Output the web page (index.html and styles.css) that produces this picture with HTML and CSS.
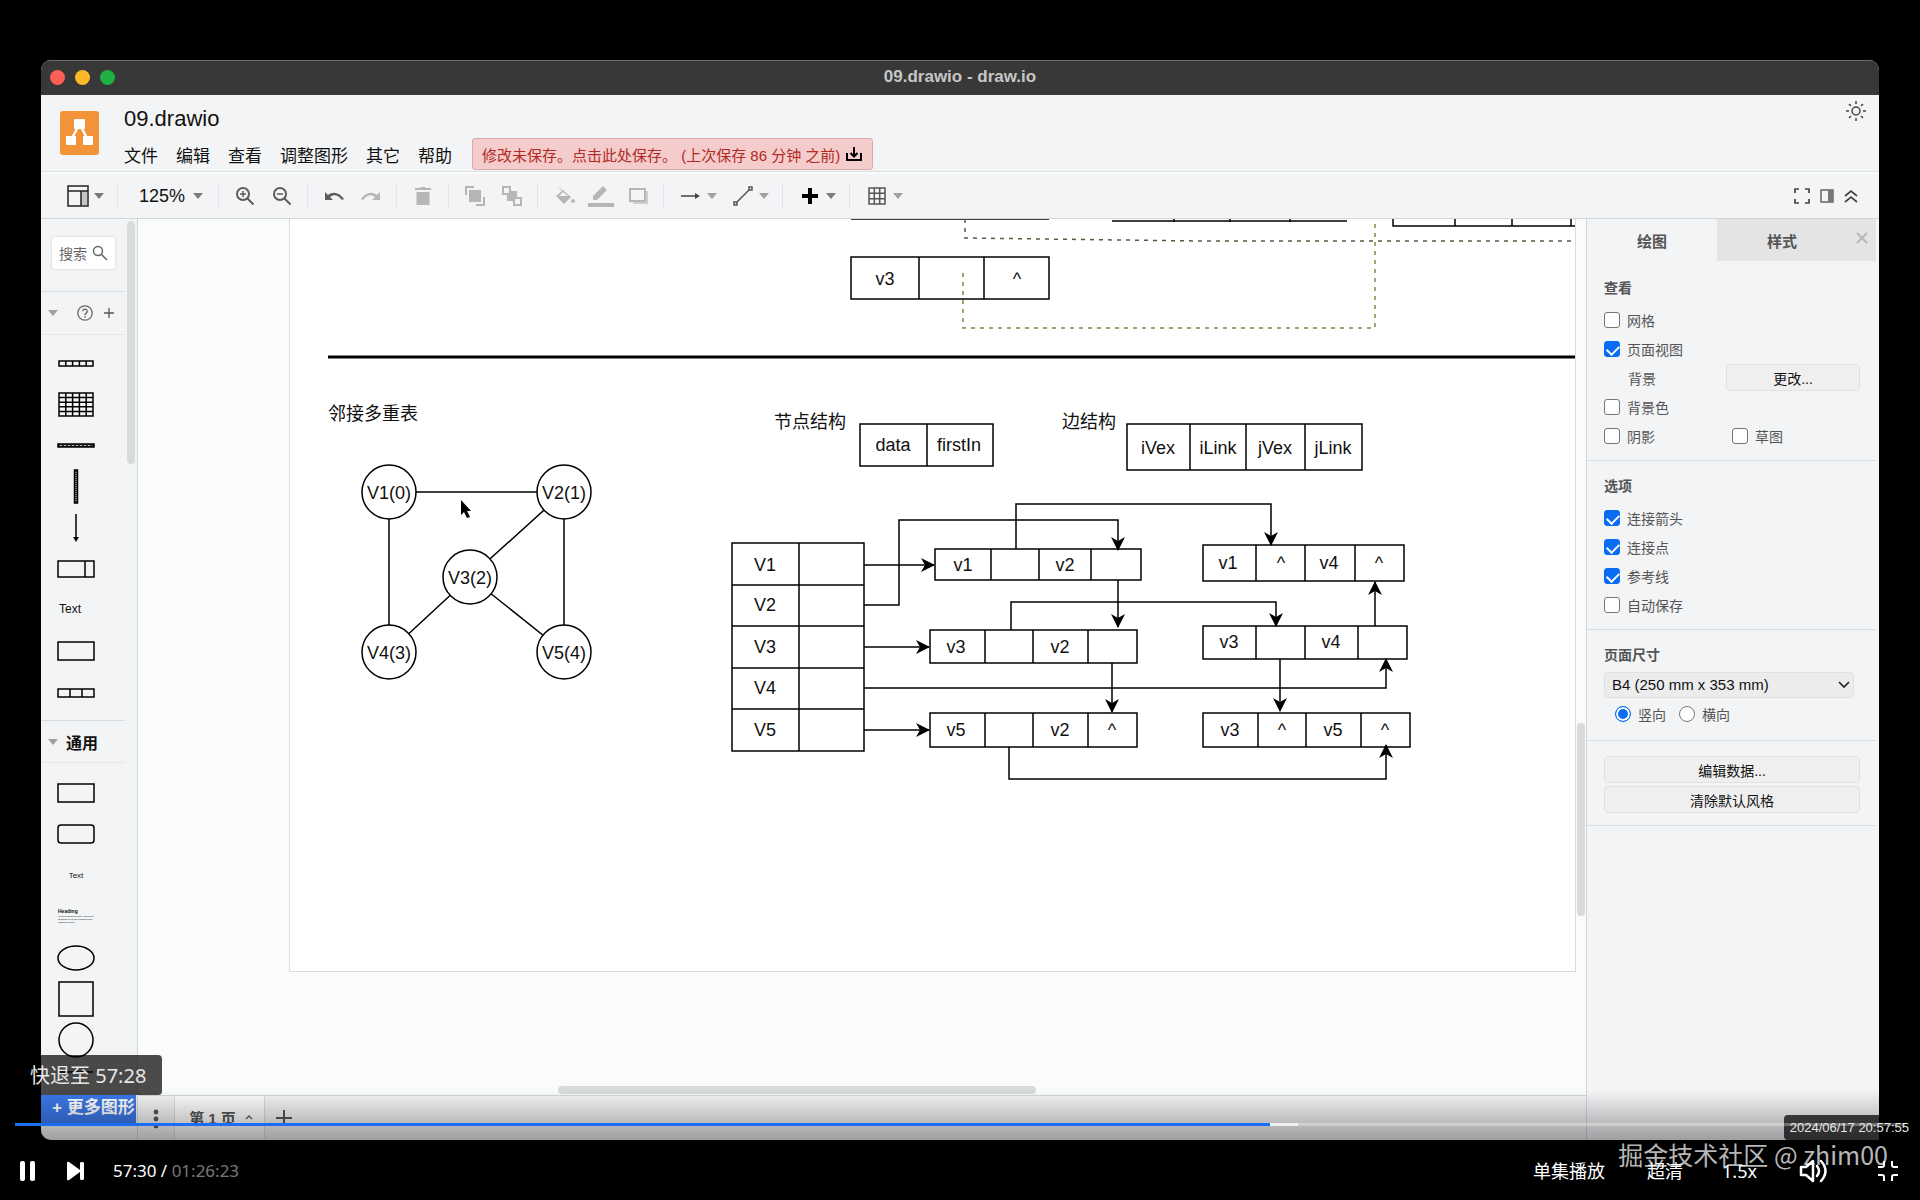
FILE: index.html
```html
<!DOCTYPE html>
<html lang="zh-CN">
<head>
<meta charset="utf-8">
<title>09.drawio - draw.io</title>
<link rel="stylesheet" href="styles.css">
</head>
<body>
<div class="player">
  <div class="window">
    <div class="titlebar">
      <div class="lights"><i class="light red"></i><i class="light yellow"></i><i class="light green"></i></div>
      <div class="window-title">09.drawio - draw.io</div>
      <div class="lights-space"></div>
    </div>

    <header class="header">
      <svg class="logo" viewBox="0 0 39 44"><rect width="39" height="44" rx="3" fill="#f2933a"/><path d="M19.500 13L11 29M19.500 13L28 29" stroke="#fff" stroke-width="2.500"/><rect x="14" y="8" width="11" height="10" rx="1" fill="#fff"/><rect x="6" y="25" width="10" height="9" rx="1" fill="#fff"/><rect x="23" y="25" width="10" height="9" rx="1" fill="#fff"/></svg>
      <div class="header-text">
        <h1 class="filename">09.drawio</h1>
        <nav class="menus">
          <a class="menu" href="#">文件</a><a class="menu" href="#">编辑</a><a class="menu" href="#">查看</a><a class="menu" href="#">调整图形</a><a class="menu" href="#">其它</a><a class="menu" href="#">帮助</a>
          <button class="save-note">修改未保存。点击此处保存。 (上次保存 86 分钟 之前)
            <svg width="16" height="16" viewBox="0 0 16 16" fill="none" stroke="#000" stroke-width="2"><path d="M1 7v7h14V7M8 1v9M4.500 7L8 10.500 11.500 7"/></svg>
          </button>
        </nav>
      </div>
      <button class="theme" aria-label="外观"><svg width="20" height="20" viewBox="0 0 20 20" fill="none" stroke="#444" stroke-width="1.500"><circle cx="10" cy="10" r="4"/><path d="M10 0v3M10 17v3M0 10h3M17 10h3M3 3l2 2M15 15l2 2M17 3l-2 2M5 15l-2 2"/></svg></button>
    </header>

    <div class="toolbar">
      <div class="group"><button class="drop" aria-label="布局"><svg class="icon" viewBox="0 0 22 22"><path d="M14 6h6v14h-6z" fill="#c4c4c4"/><path d="M1 1h20v20H1zM1 6h20M14 6v15" fill="none" stroke="#222" stroke-width="1.500"/></svg><i class="caret"></i></button></div>
      <div class="group"><button class="drop zoom-drop">125%<i class="caret"></i></button></div>
      <div class="group">
        <button class="tool" aria-label="放大"><svg class="icon" viewBox="0 0 22 22" fill="none" stroke="#5c5c5c" stroke-width="2"><circle cx="9" cy="9" r="6"/><path d="M13.500 13.500l6 6"/><path d="M6 9h6M9 6v6" stroke-width="1.500"/></svg></button>
        <button class="tool" aria-label="缩小"><svg class="icon" viewBox="0 0 22 22" fill="none" stroke="#5c5c5c" stroke-width="2"><circle cx="9" cy="9" r="6"/><path d="M13.500 13.500l6 6"/><path d="M6 9h6" stroke-width="1.500"/></svg></button>
      </div>
      <div class="group">
        <button class="tool" aria-label="撤销"><svg class="icon" viewBox="0 0 22 22"><path d="M2 7v8h8L7 12c4-3 8-2 12 3l2-1C16 7 10 6 5 10z" fill="#5c5c5c"/></svg></button>
        <button class="tool faded" aria-label="重做"><svg class="icon" viewBox="0 0 22 22"><path d="M20 7v8h-8l3-3c-4-3-8-2-12 3l-2-1C6 7 12 6 17 10z" fill="#5c5c5c"/></svg></button>
      </div>
      <div class="group"><button class="tool faded" aria-label="删除"><svg class="icon" viewBox="0 0 22 22"><path d="M3 3h5l1-1h4l1 1h5v2H3zM4.500 7h13v13h-13z" fill="#5c5c5c"/></svg></button></div>
      <div class="group">
        <button class="tool faded" aria-label="移至最前"><svg class="icon" viewBox="0 0 22 22" fill="none" stroke="#5c5c5c" stroke-width="2"><path d="M6 6h10v10H6z" fill="#5c5c5c"/><path d="M2 10V2h8M20 12v8h-8"/></svg></button>
        <button class="tool faded" aria-label="移至最后"><svg class="icon" viewBox="0 0 22 22" fill="none" stroke="#5c5c5c" stroke-width="2"><path d="M7 7h8v8H7z" fill="#5c5c5c"/><path d="M2 2h7v7H2zM13 13h7v7h-7z" fill="#f3f4f6"/></svg></button>
      </div>
      <div class="group">
        <button class="tool faded" aria-label="填充"><svg class="icon" viewBox="0 0 22 22"><path d="M5 2l6 4 7 6-7 7-8-8 6-5-4-4z" fill="#5c5c5c"/><path d="M6 11l4-4 5 4z" fill="#f3f4f6"/><circle cx="20" cy="16" r="2" fill="#5c5c5c"/></svg></button>
        <button class="tool faded" aria-label="线条"><svg class="icon wide" viewBox="0 0 26 22"><path d="M5 15v-4L15 1l4 4L9 15zM0 18h26v4H0z" fill="#5c5c5c"/></svg></button>
        <button class="tool faded" aria-label="阴影"><svg class="icon" viewBox="0 0 22 22" fill="none" stroke="#5c5c5c"><path d="M6 6h15v13H6z" fill="#999" stroke="none"/><path d="M3 4h15v12H3z" fill="#f3f4f6" stroke-width="2"/></svg></button>
      </div>
      <div class="group">
        <button class="drop" aria-label="连接"><svg class="icon" viewBox="0 0 22 22"><path d="M1 11h15" stroke="#444" stroke-width="1.500"/><path d="M15 8l5 3-5 3z" fill="#444"/></svg><i class="caret light-caret"></i></button>
        <button class="drop" aria-label="路径"><svg class="icon" viewBox="0 0 22 22" fill="none" stroke="#555" stroke-width="1.500"><path d="M4 18L18 4M2 17h3v3H2zM17 2h3v3h-3z"/></svg><i class="caret light-caret"></i></button>
      </div>
      <div class="group"><button class="drop" aria-label="插入"><svg class="icon" viewBox="0 0 22 22"><path d="M11 3v16M3 11h16" stroke="#000" stroke-width="4"/></svg><i class="caret"></i></button></div>
      <div class="group last"><button class="drop" aria-label="表格"><svg class="icon" viewBox="0 0 22 22" fill="none" stroke="#555" stroke-width="1.500"><path d="M3 3h16v16H3zM3 8.300h16M3 13.700h16M8.300 3v16M13.700 3v16"/></svg><i class="caret light-caret"></i></button></div>
      <div class="toolbar-end">
        <button class="mini" aria-label="全屏"><svg width="16" height="16" viewBox="0 0 16 16" fill="none" stroke="#444" stroke-width="1.700"><path d="M1 5V1h4M11 1h4v4M15 11v4h-4M5 15H1v-4"/></svg></button>
        <button class="mini" aria-label="格式"><svg width="14" height="14" viewBox="0 0 14 14"><path d="M1 1h12v12H1z" fill="none" stroke="#666" stroke-width="1.500"/><path d="M8 1h5v12H8z" fill="#777"/></svg></button>
        <button class="mini" aria-label="收起"><svg width="14" height="14" viewBox="0 0 14 14" fill="none" stroke="#444" stroke-width="1.700"><path d="M1 7l6-5 6 5M1 13l6-5 6 5"/></svg></button>
      </div>
    </div>

    <div class="workspace">
      <aside class="sidebar">
        <div class="sidebar-scroll">
          <div class="search-row"><div class="search"><input class="search-input" type="text" aria-label="搜索" placeholder="搜索"><svg width="16" height="16" viewBox="0 0 16 16" fill="none" stroke="#666" stroke-width="1.500"><circle cx="6" cy="6" r="4.500"/><path d="M9.500 9.500l5.500 5.500"/></svg></div></div>
          <div class="section-head"><i class="caret light-caret"></i>
            <svg class="help" width="16" height="16" viewBox="0 0 16 16" fill="none" stroke="#666" stroke-width="1.300"><circle cx="8" cy="8" r="7.200"/><path d="M5.800 6.200a2.200 2.200 0 1 1 3.400 1.900C8.300 8.700 8 9 8 10M8 11v1.500"/></svg>
            <svg width="12" height="12" viewBox="0 0 12 12" stroke="#555" stroke-width="1.300"><path d="M6 1v10M1 6h10"/></svg>
          </div>
          <div class="shapes">
            <svg class="shape" viewBox="0 0 38 41"><path d="M2 18h34v5H2zM8.800 18v5M15.600 18v5M22.400 18v5M29.200 18v5"/></svg>
            <svg class="shape" viewBox="0 0 38 41"><path d="M2 9h34v23H2zM2 13.600h34M2 18.200h34M2 22.800h34M2 27.400h34M8.800 9v23M15.600 9v23M22.400 9v23M29.200 9v23"/></svg>
            <svg class="shape" viewBox="0 0 38 41"><path d="M1 19h36v3H1z" fill="#333"/><path d="M3 20.500h32" stroke="#ddd" stroke-width=".8" stroke-dasharray="2 2"/></svg>
            <svg class="shape" viewBox="0 0 38 41"><path d="M17.500 4h3v33h-3z" fill="#333"/><path d="M19 6v29" stroke="#ddd" stroke-width=".8" stroke-dasharray="1 1"/></svg>
            <svg class="shape" viewBox="0 0 38 41"><path d="M19 7v24"/><path d="M16 30h6l-3 5z" fill="#000" stroke="none"/></svg>
            <svg class="shape" viewBox="0 0 38 41"><path d="M1 13h36v16H1zM28 13v16"/></svg>
            <div class="shape-text">Text</div>
            <svg class="shape" viewBox="0 0 38 41"><path d="M1 12h36v18H1z"/></svg>
            <svg class="shape" viewBox="0 0 38 41"><path d="M1 18h36v8H1zM13 18v8M25 18v8"/></svg>
          </div>
          <div class="section-head second"><i class="caret light-caret"></i><span>通用</span></div>
          <div class="shapes general">
            <svg class="shape" viewBox="0 0 38 41"><path d="M1 11h36v18H1z"/></svg>
            <svg class="shape" viewBox="0 0 38 41"><rect x="1" y="11" width="36" height="18" rx="3"/></svg>
            <div class="shape-text small">Text</div>
            <div class="shape-text heading"><b>Heading</b><span class="lorem">Lorem ipsum dolor sit amet, consectetur adipisicing elit, sed do eiusmod tempor incididunt ut labore</span></div>
            <svg class="shape" viewBox="0 0 38 41"><ellipse cx="19" cy="21" rx="18" ry="12"/></svg>
            <svg class="shape" viewBox="0 0 38 41"><path d="M2 4h34v34H2z"/></svg>
            <svg class="shape" viewBox="0 0 38 41"><circle cx="19" cy="21" r="17"/></svg>
            <svg class="shape" viewBox="0 0 38 41"><path d="M2 12h34"/></svg>
          </div>
        </div>
        <i class="scroll side-scroll"></i>
        <div class="sidebar-foot"><button class="more">+ 更多图形</button></div>
      </aside>

      <main class="main">
        <div class="canvas">
          <svg class="sheet" width="1285" height="752" viewBox="290 219 1285 752">
            <defs><marker id="arrow" markerUnits="userSpaceOnUse" markerWidth="14" markerHeight="14" refX="13" refY="7" orient="auto"><path d="M0 0L14 7L0 14L4 7z"/></marker></defs>
            <g class="line">
              <path d="M851 219h198M1112 221h235M1174 219v3M1230 219v3M1290 219v3M1393 219v7h182M1455 219v7M1512 219v7M1571 219v7"/>
              <path d="M851 257h198v42H851zM919 257v42M984 257v42"/>
              <path class="thick" d="M328 357h1247"/>
              <path d="M860 424h133v42H860zM927 424v42M1127 424h235v46h-235zM1190 424v46M1246 424v46M1305 424v46"/>
              <path d="M389 492h175M389 492v160M564 492v160M564 492L470 577M470 577L389 652M470 577L564 652"/>
              <g class="node"><circle cx="389" cy="492" r="27"/><circle cx="564" cy="492" r="27"/><circle cx="470" cy="577" r="27"/><circle cx="389" cy="652" r="27"/><circle cx="564" cy="652" r="27"/></g>
              <path d="M732 543h132v208H732zM799 543v208M732 585h132M732 626h132M732 668h132M732 709h132"/>
              <path d="M935 549h206v31H935zM991 549v31M1039 549v31M1091 549v31"/>
              <path d="M930 630h207v33H930zM985 630v33M1033 630v33M1088 630v33"/>
              <path d="M930 713h207v34H930zM985 713v34M1033 713v34M1088 713v34"/>
              <path d="M1203 545h201v36h-201zM1256 545v36M1305 545v36M1355 545v36"/>
              <path d="M1203 626h204v33h-204zM1256 626v33M1305 626v33M1358 626v33"/>
              <path d="M1203 713h207v34h-207zM1258 713v34M1306 713v34M1361 713v34"/>
            </g>
            <g class="line edge">
              <path d="M864 565h70"/><path d="M864 605h35V520h219v30"/><path d="M864 647h65"/><path d="M864 688h522v-29"/><path d="M864 730h65"/>
              <path d="M1016 549v-45h255v41"/><path d="M1118 580v47"/><path d="M1011 630v-28h265v24"/><path d="M1112 663v49"/>
              <path d="M1009 747v32h377v-34"/><path d="M1280 659v52"/><path d="M1375 626v-44"/>
            </g>
            <path class="dash dark" d="M965 219v19L1200 241H1573"/>
            <path class="dash" d="M963 273v55h412V219"/>
            <g class="label">
              <text x="885" y="285">v3</text><text x="1017" y="285">^</text>
              <text x="893" y="451">data</text><text x="959" y="451">firstIn</text>
              <text x="1158" y="454">iVex</text><text x="1218" y="454">iLink</text><text x="1275" y="454">jVex</text><text x="1333" y="454">jLink</text>
              <text x="373" y="420">邻接多重表</text><text x="810" y="428">节点结构</text><text x="1089" y="428">边结构</text>
              <text x="389" y="499">V1(0)</text><text x="564" y="499">V2(1)</text><text x="470" y="584">V3(2)</text><text x="389" y="659">V4(3)</text><text x="564" y="659">V5(4)</text>
              <text x="765" y="571">V1</text><text x="765" y="611">V2</text><text x="765" y="653">V3</text><text x="765" y="694">V4</text><text x="765" y="736">V5</text>
              <text x="963" y="571">v1</text><text x="1065" y="571">v2</text>
              <text x="956" y="653">v3</text><text x="1060" y="653">v2</text>
              <text x="956" y="736">v5</text><text x="1060" y="736">v2</text><text x="1112" y="736">^</text>
              <text x="1228" y="569">v1</text><text x="1281" y="569">^</text><text x="1329" y="569">v4</text><text x="1379" y="569">^</text>
              <text x="1229" y="648">v3</text><text x="1331" y="648">v4</text>
              <text x="1230" y="736">v3</text><text x="1282" y="736">^</text><text x="1333" y="736">v5</text><text x="1385" y="736">^</text>
            </g>
            <path d="M461 500v15l3-3 3 6 3-1-3-6h4z"/>
          </svg>
          <i class="scroll canvas-v"></i><i class="scroll canvas-h"></i>
        </div>
        <footer class="pages">
          <button class="dots" aria-label="页面"><svg width="6" height="20" viewBox="0 0 6 20" fill="#555"><circle cx="3" cy="3" r="2.400"/><circle cx="3" cy="10" r="2.400"/><circle cx="3" cy="17" r="2.400"/></svg></button>
          <button class="page-tab">第 1 页<svg width="8" height="6" viewBox="0 0 8 6" fill="none" stroke="#666" stroke-width="1.500"><path d="M1 5l3-3 3 3"/></svg></button>
          <button class="add" aria-label="插入页面"><svg width="18" height="18" viewBox="0 0 18 18" stroke="#555" stroke-width="2"><path d="M9 1v16M1 9h16"/></svg></button>
        </footer>
      </main>

      <aside class="format">
        <div class="tabs"><button class="tab active">绘图</button><button class="tab">样式</button><button class="close" aria-label="关闭"><svg width="12" height="12" viewBox="0 0 12 12" stroke="#b4b8bd" stroke-width="2"><path d="M1 1l10 10M11 1L1 11"/></svg></button></div>
        <section class="panel">
          <h2 class="panel-title">查看</h2>
          <label class="row"><input class="check" type="checkbox">网格</label>
          <label class="row"><input class="check" type="checkbox" checked>页面视图</label>
          <div class="row indent"><span class="cell">背景</span><button class="btn change">更改...</button></div>
          <label class="row"><input class="check" type="checkbox">背景色</label>
          <div class="row"><label class="half"><input class="check" type="checkbox">阴影</label><label class="half"><input class="check" type="checkbox">草图</label></div>
        </section>
        <section class="panel">
          <h2 class="panel-title">选项</h2>
          <label class="row"><input class="check" type="checkbox" checked>连接箭头</label>
          <label class="row"><input class="check" type="checkbox" checked>连接点</label>
          <label class="row"><input class="check" type="checkbox" checked>参考线</label>
          <label class="row"><input class="check" type="checkbox">自动保存</label>
        </section>
        <section class="panel">
          <h2 class="panel-title">页面尺寸</h2>
          <div class="select-box"><select class="size" aria-label="页面尺寸"><option>B4 (250 mm x 353 mm)</option></select><svg class="chevron" width="12" height="8" viewBox="0 0 12 8" fill="none" stroke="#222" stroke-width="1.600"><path d="M1 1l5 5 5-5"/></svg></div>
          <div class="row radios"><label class="radio-label"><input class="radio" type="radio" name="dir" checked>竖向</label><label class="radio-label"><input class="radio" type="radio" name="dir">横向</label></div>
        </section>
        <section class="panel actions">
          <button class="btn">编辑数据...</button>
          <button class="btn">清除默认风格</button>
        </section>
      </aside>
    </div>
    <div class="shade"></div>
  </div>

  <div class="controls">
    <div class="toast">快退至 57:28</div>
    <div class="stamp">2024/06/17 20:57:55</div>
    <div class="track"><div class="loaded" style="width:67.900%"></div><div class="played" style="width:66.400%"></div></div>
    <button class="ctl" aria-label="暂停"><svg width="16" height="20" viewBox="0 0 16 20" fill="#fff"><rect width="5" height="20" rx="2"/><rect x="10" width="5" height="20" rx="2"/></svg></button>
    <button class="ctl next" aria-label="下一个"><svg width="18" height="20" viewBox="0 0 18 20" fill="#fff"><path d="M0 2q0-2 2-1l11 8V2q0-1 2-1t2 1v16q0 1-2 1t-2-1v-7L2 19q-2 1-2-1z"/></svg></button>
    <div class="time">57:30 / <span class="total">01:26:23</span></div>
    <button class="ctl text first">单集播放</button>
    <button class="ctl text quality">超清</button>
    <button class="ctl text">1.5x</button>
    <button class="ctl sound" aria-label="音量"><svg width="30" height="24" viewBox="0 0 30 24" fill="none" stroke="#fff" stroke-width="2.500" stroke-linejoin="round" stroke-linecap="round"><path d="M2 8h5l7-6v20l-7-6H2zM18 7q4 5 0 10M22 2q9 10 0 20"/></svg></button>
    <button class="ctl" aria-label="退出全屏"><svg width="22" height="22" viewBox="0 0 22 22" fill="none" stroke="#fff" stroke-width="2"><path d="M1 7h4q2 0 2-2V1M15 1v4q0 2 2 2h4M21 15h-4q-2 0-2 2v4M7 21v-4q0-2-2-2H1"/></svg></button>
    <div class="watermark">掘金技术社区 @ zhim00</div>
  </div>
</div>
</body>
</html>
```
FILE: styles.css
```css
* { box-sizing: border-box; }
body { margin: 0; background: #000; color: #111; font-family: "Liberation Sans", "Noto Sans CJK SC", sans-serif; }
button { margin: 0; padding: 0; border: 0; background: none; font: inherit; color: inherit; }
a { color: inherit; text-decoration: none; }
svg { display: block; flex: none; }

.player { height: 100vh; display: flex; flex-direction: column; padding-top: 60px; overflow: hidden; }
.window { position: relative; flex: 1; min-height: 0; margin: 0 41px; display: flex; flex-direction: column; background: #f3f4f6; border-radius: 10px 10px 0 10px; overflow: hidden; }

.titlebar { height: 35px; flex: none; display: flex; align-items: center; padding: 0 9px 2px; background: #383838; border-top: 1px solid #6c6c6c; }
.lights { display: flex; gap: 10px; width: 80px; }
.lights-space { width: 80px; }
.light { width: 15px; height: 15px; border-radius: 50%; }
.red { background: #fe5f57; }
.yellow { background: #fdb827; }
.green { background: #1fb141; }
.window-title { flex: 1; text-align: center; color: #c6c6c6; font: bold 17px/20px "Liberation Sans", sans-serif; }

.header { height: 77px; flex: none; display: flex; align-items: flex-start; padding: 0 13px 0 19px; border-bottom: 1px solid #dcdfe2; }
.logo { width: 39px; height: 44px; margin-top: 16px; }
.header-text { flex: 1; margin-left: 25px; padding-top: 12px; }
.filename { margin: 0; font-size: 22px; line-height: 24px; font-weight: normal; }
.menus { display: flex; align-items: center; gap: 18px; height: 32px; margin-top: 7px; font-size: 17px; white-space: nowrap; }
.save-note { display: flex; align-items: center; gap: 6px; height: 32px; padding: 0 10px 0 9px; margin-left: 2px; border: 1px solid #dba9a9; border-radius: 3px; background: #f3cccb; color: #b12a25; font-size: 15px; }
.theme { margin-top: 6px; }

.toolbar { height: 47px; flex: none; display: flex; align-items: center; padding-left: 10px; border-top: 2px solid #fafbfb; border-bottom: 1px solid #d3d6d9; }
.group { display: flex; align-items: center; height: 26px; padding: 0 7px; border-right: 1px solid #e3e5e8; }
.last { border-right: 0; }
.tool { width: 37px; display: flex; justify-content: center; }
.drop { width: 52px; display: flex; align-items: center; gap: 5px; padding-left: 9px; }
.zoom-drop { width: 86px; gap: 8px; padding-left: 14px; font-size: 18px; }
.icon { width: 22px; height: 22px; }
.wide { width: 26px; }
.faded { opacity: .4; }
.caret { flex: none; border: 5px solid transparent; border-top: 6px solid #7a7a7a; border-bottom: 0; }
.light-caret { border-top-color: #a0a0a0; }
.toolbar-end { margin-left: auto; display: flex; align-items: center; gap: 10px; padding-right: 21px; }

.workspace { flex: 1; min-height: 0; display: flex; }
.scroll { position: absolute; border-radius: 4px; background: #d9dadc; }

.sidebar { position: relative; width: 97px; flex: none; display: flex; flex-direction: column; overflow: hidden; border-right: 1px solid #d3d6d9; }
.sidebar-scroll { flex: 1; min-height: 0; overflow: hidden; padding-right: 12px; }
.search-row { height: 73px; padding: 18px 0 0 11px; border-bottom: 1px solid #d9dcdf; }
.search { width: 63px; height: 32px; display: flex; align-items: center; padding: 0 7px; background: #fff; border-radius: 3px; box-shadow: 0 0 2px #bbb; }
.search-input { width: 33px; padding: 0; border: 0; outline: 0; background: none; font: 14px/20px "Noto Sans CJK SC", sans-serif; }
.search-input::placeholder { color: #666; opacity: 1; }
.section-head { height: 43px; display: flex; align-items: center; padding-left: 7px; border-bottom: 1px solid #e4e6e8; font-size: 16px; font-weight: bold; }
.help { margin: 0 10px 0 19px; }
.second { gap: 8px; border-top: 1px solid #d9dcdf; }
.shapes { padding: 8px 0 8px 16px; }
.general { padding-top: 10px; }
.shape { width: 38px; height: 41px; fill: none; stroke: #000; stroke-width: 1.5; }
.shape-text { height: 41px; width: 38px; padding-left: 2px; font-size: 12px; line-height: 41px; }
.small { padding: 0; text-align: center; font-size: 8px; }
.heading { display: flex; flex-direction: column; padding: 11px 0 0 1px; font-size: 5px; line-height: 8px; }
.lorem { font-size: 2px; line-height: 3px; }
.side-scroll { right: 2px; top: 2px; width: 8px; height: 243px; }
.sidebar-foot { height: 45px; flex: none; }
.more { display: block; width: 95px; height: 29px; padding: 0 0 3px 11px; overflow: hidden; white-space: nowrap; text-align: left; background: #3b78e8; color: #fff; font-size: 17px; line-height: 24px; font-weight: bold; }

.main { flex: 1; min-width: 0; display: flex; flex-direction: column; }
.canvas { position: relative; flex: 1; min-height: 0; overflow: hidden; padding: 0 11px 0 152px; background: #fafbfb; }
.sheet { background: #fff; outline: 1px solid #dcdcdc; }
.canvas-v { right: 1px; top: 504px; width: 8px; height: 193px; }
.canvas-h { left: 29%; bottom: 1px; width: 33%; height: 8px; }
.line path { fill: none; stroke: #000; stroke-width: 1.5; }
.line .thick { stroke-width: 3; }
.node circle { fill: #fff; stroke: #000; stroke-width: 1.5; }
.edge path { marker-end: url(#arrow); }
.dash { fill: none; stroke: #86844a; stroke-width: 1.5; stroke-dasharray: 4 5; }
.dark { stroke: #4e5f40; }
.label text { font-size: 18px; text-anchor: middle; fill: #111; }

.pages { height: 45px; flex: none; display: flex; border-top: 1px solid #d3d6d9; color: #555; }
.dots { width: 37px; display: flex; justify-content: center; padding-top: 13px; border-right: 1px solid #d9dcdf; }
.page-tab { width: 90px; height: 42px; display: flex; align-items: center; justify-content: center; gap: 9px; padding-left: 3px; background: #fdfdfd; border-right: 1px solid #d9dcdf; font-size: 15px; font-weight: bold; }
.add { width: 38px; display: flex; justify-content: center; padding-top: 13px; }

.format { width: 293px; flex: none; padding-right: 3px; border-left: 1px solid #d3d6d9; color: #555; font-size: 14px; }
.tabs { height: 42px; display: flex; margin-bottom: 2px; }
.tab { flex: 1; height: 42px; background: #e4e4e4; font-size: 15px; font-weight: bold; }
.active { background: none; }
.close { width: 29px; padding: 13px 0 0 9px; background: #e4e4e4; display: flex; align-items: flex-start; }
.panel { padding: 11px 16px 10px 17px; border-bottom: 1px solid #d9dcdf; }
.panel-title { margin: 0 0 3px; font-size: 14px; line-height: 28px; }
.row { height: 29px; display: flex; align-items: center; }
.indent { padding-left: 24px; }
.cell { flex: 1; }
.half { flex: 1; display: flex; align-items: center; }
.check, .radio { appearance: none; flex: none; width: 16px; height: 16px; margin: 0 7px 0 0; border: 1px solid #777; border-radius: 3px; background: #fff; }
.check:checked { border-color: #0a6cf0; background: #0a6cf0; position: relative; }
.check:checked::after { content: ""; position: absolute; left: 4px; top: 1px; width: 6px; height: 10px; border: solid #fff; border-width: 0 2px 2px 0; transform: rotate(45deg); }
.radio { border-radius: 50%; }
.radio:checked { border-color: #0a6cf0; background: #0a6cf0; box-shadow: inset 0 0 0 2px #fff; }
.btn { height: 27px; border: 1px solid #e0e1e3; border-radius: 4px; background: #efeff0; color: #111; font-size: 14px; }
.change { width: 134px; }
.select-box { position: relative; margin-right: 6px; }
.size { appearance: none; display: block; width: 100%; height: 26px; padding: 0 7px; border: 1px solid #dfe0e2; border-radius: 4px; background: #ececed; color: #111; font: 15px/20px "Liberation Sans", sans-serif; }
.chevron { position: absolute; right: 4px; top: 9px; }
.radios { height: 32px; padding-left: 11px; gap: 13px; }
.radio-label { display: flex; align-items: center; }
.actions { display: flex; flex-direction: column; gap: 3px; padding-top: 15px; padding-bottom: 12px; }

.shade { position: absolute; left: 0; right: 0; bottom: 0; height: 50px; background: linear-gradient(transparent, rgba(0, 0, 0, .35)); }

.controls { position: relative; height: 60px; flex: none; display: flex; align-items: center; padding: 2px 21px 0 20px; color: #fff; font: 18px/24px "Noto Sans", "Noto Sans CJK SC", sans-serif; }
.track { position: absolute; left: 15px; right: 15px; top: -17px; height: 3px; background: rgba(255, 255, 255, .3); }
.loaded, .played { position: absolute; left: 0; top: 0; height: 3px; background: rgba(255, 255, 255, .7); }
.played { background: #1b6ef3; }
.toast { position: absolute; left: 14px; top: -85px; height: 40px; padding: 0 16px; border-radius: 4px; background: rgba(0, 0, 0, .7); color: #e6e6e6; font-size: 20px; line-height: 41px; }
.stamp { position: absolute; right: 5px; top: -25px; height: 25px; padding: 0 6px; border-radius: 4px; background: rgba(0, 0, 0, .72); color: #e6e6e6; font: 13px/25px "Liberation Sans", sans-serif; }
.ctl { flex: none; }
.next { margin-left: 31px; }
.time { margin-left: 28px; font-size: 17px; }
.total { color: #777; }
.first { margin-left: auto; }
.text { margin-right: 42px; }
.quality { margin-right: 39px; }
.sound { margin-right: 48px; }
.watermark { position: absolute; right: 32px; top: -4px; font: 25px/36px "Noto Sans CJK SC", sans-serif; color: rgba(255, 255, 255, .72); }
```
